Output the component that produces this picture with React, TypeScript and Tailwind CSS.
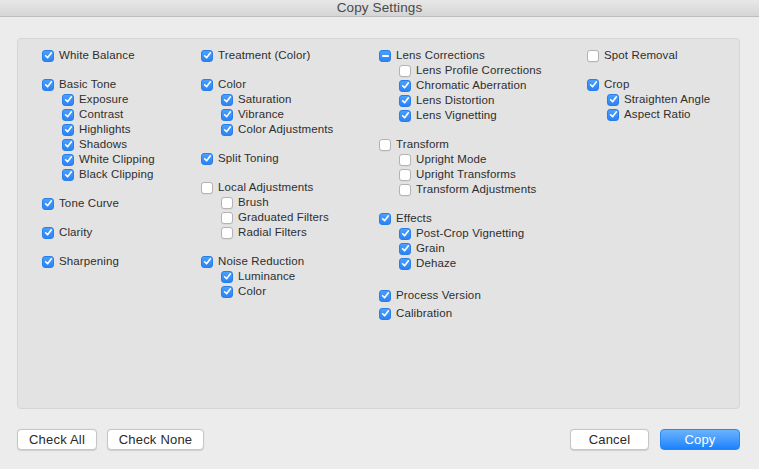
import React from "react";

type State = "on" | "off" | "mixed";

function Box({ state }: { state: State }) {
  if (state === "off") {
    return (
      <span className="block w-[12px] h-[12px] rounded-[3px] bg-white border border-[#b3b3b3] shadow-[0_0.5px_0.5px_rgba(0,0,0,0.08)] shrink-0" />
    );
  }
  return (
    <span className="flex items-center justify-center w-[12px] h-[12px] rounded-[3px] bg-gradient-to-b from-[#4aa0fb] to-[#2b83f6] border border-[#2a7ee8] shrink-0">
      {state === "on" ? (
        <svg width="9" height="9" viewBox="0 0 9 9" fill="none">
          <path d="M1.6 4.8 L3.6 6.8 L7.4 1.8" stroke="white" strokeWidth="1.6" strokeLinecap="round" strokeLinejoin="round" />
        </svg>
      ) : (
        <span className="block w-[7px] h-[2px] rounded-[1px] bg-white" />
      )}
    </span>
  );
}

function Row({ label, state = "on", sub = false }: { label: string; state?: State; sub?: boolean }) {
  return (
    <div className={`flex items-center h-[15px] gap-[5px] ${sub ? "pl-[20px]" : ""}`}>
      <Box state={state} />
      <span className="whitespace-nowrap leading-none">{label}</span>
    </div>
  );
}

type Item = { label: string; state?: State; subs?: { label: string; state?: State }[]; mt?: string };

function Group({ item }: { item: Item }) {
  return (
    <div className={item.mt ?? ""}>
      <Row label={item.label} state={item.state} />
      {item.subs?.map((s) => (
        <Row key={s.label} label={s.label} state={s.state} sub />
      ))}
    </div>
  );
}

const col1: Item[] = [
  { label: "White Balance" },
  {
    label: "Basic Tone",
    mt: "mt-[14px]",
    subs: [
      { label: "Exposure" },
      { label: "Contrast" },
      { label: "Highlights" },
      { label: "Shadows" },
      { label: "White Clipping" },
      { label: "Black Clipping" },
    ],
  },
  { label: "Tone Curve", mt: "mt-[14px]" },
  { label: "Clarity", mt: "mt-[14px]" },
  { label: "Sharpening", mt: "mt-[14px]" },
];

const col2: Item[] = [
  { label: "Treatment (Color)" },
  {
    label: "Color",
    mt: "mt-[14px]",
    subs: [{ label: "Saturation" }, { label: "Vibrance" }, { label: "Color Adjustments" }],
  },
  { label: "Split Toning", mt: "mt-[14px]" },
  {
    label: "Local Adjustments",
    state: "off",
    mt: "mt-[14px]",
    subs: [
      { label: "Brush", state: "off" },
      { label: "Graduated Filters", state: "off" },
      { label: "Radial Filters", state: "off" },
    ],
  },
  {
    label: "Noise Reduction",
    mt: "mt-[14px]",
    subs: [{ label: "Luminance" }, { label: "Color" }],
  },
];

const col3: Item[] = [
  {
    label: "Lens Corrections",
    state: "mixed",
    subs: [
      { label: "Lens Profile Corrections", state: "off" },
      { label: "Chromatic Aberration" },
      { label: "Lens Distortion" },
      { label: "Lens Vignetting" },
    ],
  },
  {
    label: "Transform",
    state: "off",
    mt: "mt-[14px]",
    subs: [
      { label: "Upright Mode", state: "off" },
      { label: "Upright Transforms", state: "off" },
      { label: "Transform Adjustments", state: "off" },
    ],
  },
  {
    label: "Effects",
    mt: "mt-[14px]",
    subs: [{ label: "Post-Crop Vignetting" }, { label: "Grain" }, { label: "Dehaze" }],
  },
  { label: "Process Version", mt: "mt-[17px]" },
  { label: "Calibration", mt: "mt-[3px]" },
];

const col4: Item[] = [
  { label: "Spot Removal", state: "off" },
  {
    label: "Crop",
    mt: "mt-[14px]",
    subs: [{ label: "Straighten Angle" }, { label: "Aspect Ratio" }],
  },
];

function Column({ items, w }: { items: Item[]; w: string }) {
  return (
    <div className={`flex flex-col ${w} shrink-0`}>
      {items.map((it) => (
        <Group key={it.label} item={it} />
      ))}
    </div>
  );
}

function Btn({ children, w, primary = false }: { children: React.ReactNode; w: string; primary?: boolean }) {
  return (
    <button
      className={`${w} h-[21px] rounded-[4px] text-[13px] tracking-[0.2px] leading-none flex items-center justify-center ${
        primary
          ? "bg-gradient-to-b from-[#6ab2fb] to-[#1682fd] text-white border border-[#2a86f2]"
          : "bg-white text-[#2a2a2a] border border-[#c6c6c6] shadow-[0_0.5px_1px_rgba(0,0,0,0.12)]"
      }`}
    >
      {children}
    </button>
  );
}

export default function App() {
  return (
    <div
      className="w-[759px] h-[469px] bg-[#ececec] flex flex-col overflow-hidden text-[#2e2e2e] text-[11.5px] tracking-[0.12px]"
      style={{ fontFamily: '"Liberation Sans", Arial, sans-serif' }}
    >
      <div className="h-[17px] shrink-0 flex items-center justify-center bg-gradient-to-b from-[#e8e8e8] to-[#d5d5d5] border-b border-[#bdbdbd] text-[13.5px] text-[#4a4a4a]">
        Copy Settings
      </div>
      <div className="flex flex-col pl-[17px] pr-[19px]">
        <div className="mt-[21px] h-[371px] bg-[#e3e3e3] border border-[#d6d6d6] rounded-[4px] flex pl-[24px] pt-[9px]">
          <Column items={col1} w="w-[159px]" />
          <Column items={col2} w="w-[178px]" />
          <Column items={col3} w="w-[208px]" />
          <Column items={col4} w="w-[140px]" />
        </div>
        <div className="mt-[20px] flex items-center">
          <Btn w="w-[80px]">Check All</Btn>
          <div className="w-[10px]" />
          <Btn w="w-[97px]">Check None</Btn>
          <div className="flex-1" />
          <Btn w="w-[79px]">Cancel</Btn>
          <div className="w-[11px]" />
          <Btn w="w-[80px]" primary>
            Copy
          </Btn>
        </div>
      </div>
    </div>
  );
}
